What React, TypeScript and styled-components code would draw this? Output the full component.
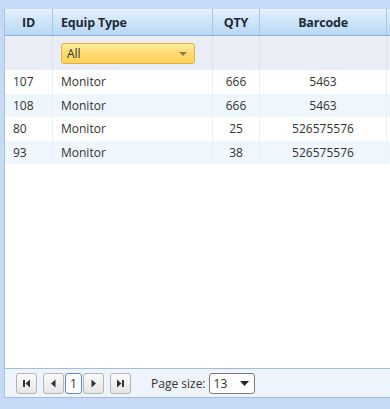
import styled, { createGlobalStyle } from 'styled-components';

const rows = [
  { id: '107', type: 'Monitor', qty: '666', barcode: '5463' },
  { id: '108', type: 'Monitor', qty: '666', barcode: '5463' },
  { id: '80', type: 'Monitor', qty: '25', barcode: '526575576' },
  { id: '93', type: 'Monitor', qty: '38', barcode: '526575576' },
];

export default function App() {
  return (
    <>
      <GlobalStyle />
      <Page>
        <Grid>
          <HeaderRow>
            <HeadCell $align="center">ID</HeadCell>
            <HeadCell>Equip Type</HeadCell>
            <HeadCell $align="center">QTY</HeadCell>
            <HeadCell $align="center">Barcode</HeadCell>
            <HeadCell />
          </HeaderRow>
          <FilterRow>
            <FilterCell />
            <FilterCell>
              <Combo>
                <span>All</span>
                <ComboArrow />
              </Combo>
            </FilterCell>
            <FilterCell />
            <FilterCell />
            <FilterCell />
          </FilterRow>
          {rows.map((r, i) => (
            <DataRow key={i} $alt={i % 2 === 1}>
              <Cell>{r.id}</Cell>
              <Cell>{r.type}</Cell>
              <Cell $align="center">{r.qty}</Cell>
              <Cell $align="center">{r.barcode}</Cell>
              <Cell />
            </DataRow>
          ))}
          <Filler />
          <Pager>
            <PagerButton>
              <svg width="9" height="9" viewBox="0 0 9 9">
                <rect x="1" y="1" width="2" height="7" fill="#333" />
                <path d="M8 0.5 L3.5 4.5 L8 8.5 Z" fill="#333" />
              </svg>
            </PagerButton>
            <NavGroup>
              <PagerButton>
                <svg width="9" height="9" viewBox="0 0 9 9">
                  <path d="M6.5 0.5 L2 4.5 L6.5 8.5 Z" fill="#333" />
                </svg>
              </PagerButton>
              <PageNumber>1</PageNumber>
              <PagerButton>
                <svg width="9" height="9" viewBox="0 0 9 9">
                  <path d="M2.5 0.5 L7 4.5 L2.5 8.5 Z" fill="#333" />
                </svg>
              </PagerButton>
            </NavGroup>
            <PagerButton>
              <svg width="9" height="9" viewBox="0 0 9 9">
                <path d="M1 0.5 L5.5 4.5 L1 8.5 Z" fill="#333" />
                <rect x="6" y="1" width="2" height="7" fill="#333" />
              </svg>
            </PagerButton>
            <SizeLabel>Page size:</SizeLabel>
            <SizeSelect>
              <span>13</span>
              <svg width="9" height="5" viewBox="0 0 9 5">
                <path d="M0 0 L9 0 L4.5 5 Z" fill="#222" />
              </svg>
            </SizeSelect>
          </Pager>
        </Grid>
      </Page>
    </>
  );
}

const GlobalStyle = createGlobalStyle`
  html, body {
    margin: 0;
    padding: 0;
    background: #c6d9f6;
  }
  body {
    font-family: "Open Sans", "Noto Sans", sans-serif;
    font-size: 12px;
    color: #333;
  }
`;

const Page = styled.div`
  width: 390px;
  height: 409px;
  box-sizing: border-box;
  padding: 9px 0 11px 4px;
  display: flex;
`;

const Grid = styled.div`
  flex: 1;
  min-width: 0;
  display: flex;
  flex-direction: column;
  background: #fff;
  border-left: 1px solid #a9c3e3;
`;

const columns = '48px 160px 47px 127px 1fr';

const HeaderRow = styled.div`
  display: grid;
  grid-template-columns: ${columns};
  height: 26px;
  background: linear-gradient(#e6f1fc, #cfe5f9 45%, #b9d8f5);
  border-bottom: 1px solid #8db2dc;
`;

const HeadCell = styled.div<{ $align?: string }>`
  display: flex;
  align-items: center;
  justify-content: ${(p) => (p.$align === 'center' ? 'center' : 'flex-start')};
  padding: 0 8px;
  border-right: 1px solid #a8c7e8;
  font-family: "Open Sans", sans-serif;
  font-weight: 700;
  font-size: 12.5px;
  color: #1e2a38;
  letter-spacing: -0.2px;
  overflow: hidden;
`;

const FilterRow = styled.div`
  display: grid;
  grid-template-columns: ${columns};
  height: 34px;
  background: #e9edf6;
`;

const FilterCell = styled.div`
  display: flex;
  align-items: center;
  padding: 0 8px;
  border-right: 1px solid #dde3ee;
  overflow: hidden;
`;

const Combo = styled.div`
  position: relative;
  width: 134px;
  height: 21px;
  flex-shrink: 0;
  box-sizing: border-box;
  display: flex;
  align-items: center;
  padding: 0 5px;
  border: 1px solid #e2ae45;
  border-radius: 3px;
  background: linear-gradient(#ffeca0, #ffd86a 55%, #ffd35c);
  font-size: 12px;
  color: #333;
`;

const ComboArrow = styled.span`
  position: absolute;
  right: 7px;
  top: 8px;
  border-left: 4px solid transparent;
  border-right: 4px solid transparent;
  border-top: 4px solid #8a7a5a;
`;

const DataRow = styled.div<{ $alt?: boolean }>`
  display: grid;
  grid-template-columns: ${columns};
  height: 23.5px;
  background: ${(p) => (p.$alt ? '#eef6fe' : '#fff')};
`;

const Cell = styled.div<{ $align?: string }>`
  display: flex;
  align-items: center;
  justify-content: ${(p) => (p.$align === 'center' ? 'center' : 'flex-start')};
  padding: 0 8px;
  border-right: 1px solid #eceff3;
  font-size: 12px;
  color: #333;
  overflow: hidden;
`;

const Filler = styled.div`
  flex: 1;
  background: #fff;
`;

const Pager = styled.div`
  height: 28px;
  display: flex;
  align-items: center;
  gap: 6px;
  padding: 0 0 0 11px;
  background: #eef4fc;
  border-top: 1px solid #a6bcd6;
  border-bottom: 1px solid #a6bcd6;
`;

const NavGroup = styled.div`
  display: flex;
  align-items: center;
  gap: 1px;
`;

const PagerButton = styled.div`
  width: 21px;
  height: 21px;
  box-sizing: border-box;
  display: flex;
  align-items: center;
  justify-content: center;
  border: 1px solid #b4b4b4;
  border-radius: 3px;
  background: linear-gradient(#fafafa, #e6e6e6);
`;

const PageNumber = styled.div`
  width: 17px;
  height: 21px;
  box-sizing: border-box;
  display: flex;
  align-items: center;
  justify-content: center;
  border: 1px solid #5d8cc9;
  border-radius: 3px;
  background: #fff;
  font-size: 12px;
  color: #333;
`;

const SizeLabel = styled.span`
  margin-left: 14px;
  font-size: 12px;
  color: #333;
`;

const SizeSelect = styled.div`
  width: 46px;
  height: 21px;
  box-sizing: border-box;
  display: flex;
  align-items: center;
  justify-content: space-between;
  padding: 0 5px 0 4px;
  margin-left: -3px;
  border: 1px solid #7a7a7a;
  border-radius: 3px;
  background: #fff;
  font-size: 12px;
  color: #333;
`;
